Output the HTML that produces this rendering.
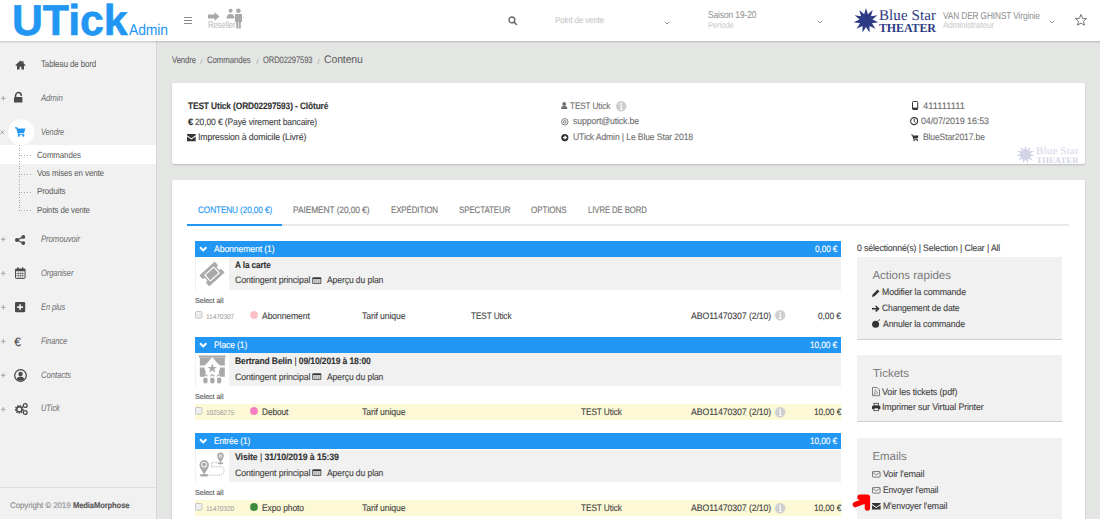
<!DOCTYPE html>
<html><head><meta charset="utf-8"><style>
*{box-sizing:border-box;margin:0;padding:0}
html,body{width:1100px;height:519px;overflow:hidden;background:#e4e6e4;font-family:"Liberation Sans",sans-serif;color:#333}
.t{position:absolute;white-space:nowrap;line-height:1;text-rendering:geometricPrecision;-webkit-text-stroke:.12px currentColor}
.i{position:absolute;overflow:visible}
.bx{position:absolute}
</style></head><body>
<div class="bx" style="left:0px;top:0px;width:1100px;height:41px;background:#fff"></div>
<div class="bx" style="left:0px;top:41px;width:157px;height:478px;background:#f1f1f1;border-right:1px solid #d6d6d6"></div>
<div class="bx" style="left:0px;top:41px;width:1100px;height:3px;background:linear-gradient(rgba(0,0,0,.2),rgba(0,0,0,.07) 40%,rgba(0,0,0,0))"></div>
<div class="bx" style="left:0px;top:487px;width:156px;height:1px;background:#dedede"></div>
<div class="bx" style="left:172px;top:83px;width:913px;height:81px;background:#fff;border-radius:2px;box-shadow:0 1px 2px rgba(0,0,0,.2)"></div>
<div class="bx" style="left:172px;top:180px;width:913px;height:350px;background:#fff;border-radius:2px;box-shadow:0 1px 2px rgba(0,0,0,.2)"></div>
<div class="bx" style="left:184px;top:17px;width:8px;height:1.2px;background:#8a8a8a"></div>
<div class="bx" style="left:184px;top:20px;width:8px;height:1.2px;background:#8a8a8a"></div>
<div class="bx" style="left:184px;top:23px;width:8px;height:1.2px;background:#8a8a8a"></div>
<div class="bx" style="left:0px;top:145px;width:156px;height:19px;background:#fff"></div>
<div class="bx" style="left:19px;top:145px;width:1px;height:66px;background:repeating-linear-gradient(180deg,#a5a5a5 0 1px,transparent 1px 2.6px)"></div>
<div class="bx" style="left:20px;top:154.5px;width:13px;height:1px;background:repeating-linear-gradient(90deg,transparent 0 1px,#a5a5a5 1px 2px,transparent 2px 3px)"></div>
<div class="bx" style="left:20px;top:173.5px;width:13px;height:1px;background:repeating-linear-gradient(90deg,transparent 0 1px,#a5a5a5 1px 2px,transparent 2px 3px)"></div>
<div class="bx" style="left:20px;top:192px;width:13px;height:1px;background:repeating-linear-gradient(90deg,transparent 0 1px,#a5a5a5 1px 2px,transparent 2px 3px)"></div>
<div class="bx" style="left:20px;top:210px;width:13px;height:1px;background:repeating-linear-gradient(90deg,transparent 0 1px,#a5a5a5 1px 2px,transparent 2px 3px)"></div>
<div class="bx" style="left:187px;top:224px;width:882px;height:1.5px;background:#e9e9e9"></div>
<div class="bx" style="left:187px;top:223.5px;width:94.5px;height:2.2px;background:#2196f3"></div>
<div class="bx" style="left:195.2px;top:241px;width:645.7px;height:15.5px;background:#2196f3"></div>
<div class="bx" style="left:195.2px;top:257.3px;width:33.5px;height:32.3px;background:#fff;border-left:1px solid #f0f0f0"></div>
<div class="bx" style="left:228.6px;top:257.3px;width:612.3px;height:32.3px;background:#f1f1f1"></div>
<div class="bx" style="left:195.2px;top:337.1px;width:645.7px;height:15.5px;background:#2196f3"></div>
<div class="bx" style="left:195.2px;top:353.40000000000003px;width:33.5px;height:32.3px;background:#fff;border-left:1px solid #f0f0f0"></div>
<div class="bx" style="left:228.6px;top:353.40000000000003px;width:612.3px;height:32.3px;background:#f1f1f1"></div>
<div class="bx" style="left:195.2px;top:404.20000000000005px;width:645.7px;height:16px;background:#fdf9d6"></div>
<div class="bx" style="left:195.2px;top:433.2px;width:645.7px;height:15.5px;background:#2196f3"></div>
<div class="bx" style="left:195.2px;top:449.5px;width:33.5px;height:32.3px;background:#fff;border-left:1px solid #f0f0f0"></div>
<div class="bx" style="left:228.6px;top:449.5px;width:612.3px;height:32.3px;background:#f1f1f1"></div>
<div class="bx" style="left:195.2px;top:500.29999999999995px;width:645.7px;height:16px;background:#fdf9d6"></div>
<div class="bx" style="left:856.5px;top:256.6px;width:205.2px;height:83px;background:#f1f1f1;border-bottom:1px solid #d0d0d0"></div>
<div class="bx" style="left:856.5px;top:355.4px;width:205.2px;height:67px;background:#f1f1f1;border-bottom:1px solid #d0d0d0"></div>
<div class="bx" style="left:856.5px;top:438.3px;width:205.2px;height:90px;background:#f1f1f1"></div>
<svg class="i" style="left:206px;top:7px;width:40px;height:24px;" viewBox="0 0 40 24">
<path d="M2 7.5h6.5V5l5 4.5-5 4.5v-2.5H2z" fill="#a9a9a9"/>
<circle cx="24.6" cy="3.8" r="2" fill="#a9a9a9"/>
<path d="M20.5 11.5q0-4.5 4-4.5t4 4.5z" fill="#a9a9a9"/>
<circle cx="32.4" cy="3.8" r="2.3" fill="#a9a9a9"/>
<path d="M29 7h7v8h-1.2v6.5h-2v-6.5h-0.6v6.5h-2v-6.5H29z" fill="#a9a9a9"/>
<circle cx="37.6" cy="10.8" r=".5" fill="#a9a9a9"/>
</svg>
<svg class="i" style="left:507.5px;top:16px;width:10px;height:10px;" viewBox="0 0 10 10"><circle cx="3.9" cy="3.9" r="2.9" fill="none" stroke="#6a6a6a" stroke-width="1.4"/><path d="M6 6l2.5 2.5" stroke="#6a6a6a" stroke-width="1.6" stroke-linecap="round"/></svg>
<svg class="i" style="left:663.8px;top:20.5px;width:6px;height:4px;" viewBox="0 0 6 4"><path d="M.8 .8l2.2 2.2 2.2-2.2" fill="none" stroke="#888" stroke-width=".9"/></svg>
<svg class="i" style="left:817px;top:20.3px;width:6px;height:4px;" viewBox="0 0 6 4"><path d="M.8 .8l2.2 2.2 2.2-2.2" fill="none" stroke="#888" stroke-width=".9"/></svg>
<svg class="i" style="left:850px;top:5px;width:30px;height:32px;" viewBox="0 0 30 32"><polygon points="16.00,3.00 17.83,9.26 22.76,4.98 20.91,11.24 27.37,10.31 22.43,14.57 28.37,17.28 21.91,18.20 25.45,23.69 19.51,20.97 19.52,27.49 16.00,22.00 12.48,27.49 12.49,20.97 6.55,23.69 10.09,18.20 3.63,17.28 9.57,14.57 4.63,10.31 11.09,11.24 9.24,4.98 14.17,9.26" fill="#2d3a84"/></svg>
<svg class="i" style="left:1049.3px;top:20.3px;width:6px;height:4px;" viewBox="0 0 6 4"><path d="M.8 .8l2.2 2.2 2.2-2.2" fill="none" stroke="#888" stroke-width=".9"/></svg>
<svg class="i" style="left:1075px;top:14px;width:12px;height:12px;" viewBox="0 0 12 12"><polygon points="6.00,0.40 7.53,4.30 11.71,4.55 8.47,7.20 9.53,11.25 6.00,9.00 2.47,11.25 3.53,7.20 0.29,4.55 4.47,4.30" fill="none" stroke="#777" stroke-width="1"/></svg>
<svg class="i" style="left:15px;top:59.5px;width:11px;height:10px;" viewBox="0 0 11 10"><path d="M5.5 .5L.3 5.2l.8.9 .9-.8V9.6h2.6V6.8h1.8v2.8h2.6V5.3l.9.8.8-.9L8.5 3.3V1h-1.3v1.2z" fill="#4a4a4a"/></svg>
<svg class="i" style="left:1px;top:95.7px;width:5px;height:5px;" viewBox="0 0 5 5"><path d="M0 2.3h4.6M2.3 0v4.6" stroke="#999" stroke-width=".8"/></svg>
<svg class="i" style="left:1px;top:237.2px;width:5px;height:5px;" viewBox="0 0 5 5"><path d="M0 2.3h4.6M2.3 0v4.6" stroke="#999" stroke-width=".8"/></svg>
<svg class="i" style="left:1px;top:270.7px;width:5px;height:5px;" viewBox="0 0 5 5"><path d="M0 2.3h4.6M2.3 0v4.6" stroke="#999" stroke-width=".8"/></svg>
<svg class="i" style="left:1px;top:304.7px;width:5px;height:5px;" viewBox="0 0 5 5"><path d="M0 2.3h4.6M2.3 0v4.6" stroke="#999" stroke-width=".8"/></svg>
<svg class="i" style="left:1px;top:338.7px;width:5px;height:5px;" viewBox="0 0 5 5"><path d="M0 2.3h4.6M2.3 0v4.6" stroke="#999" stroke-width=".8"/></svg>
<svg class="i" style="left:1px;top:372.7px;width:5px;height:5px;" viewBox="0 0 5 5"><path d="M0 2.3h4.6M2.3 0v4.6" stroke="#999" stroke-width=".8"/></svg>
<svg class="i" style="left:1px;top:406.7px;width:5px;height:5px;" viewBox="0 0 5 5"><path d="M0 2.3h4.6M2.3 0v4.6" stroke="#999" stroke-width=".8"/></svg>
<svg class="i" style="left:14px;top:92.3px;width:9px;height:11px;" viewBox="0 0 9 11"><path d="M1.6 5.2V3.4A2.8 2.8 0 0 1 7.2 3.4v.6" fill="none" stroke="#4a4a4a" stroke-width="1.5"/><rect x="0" y="5" width="8.4" height="5.6" rx=".7" fill="#4a4a4a"/></svg>
<svg class="i" style="left:7.5px;top:119px;width:27px;height:27px;" viewBox="0 0 27 27"><circle cx="13.3" cy="13.2" r="13" fill="#fff"/></svg>
<svg class="i" style="left:0px;top:130px;width:5px;height:5px;" viewBox="0 0 5 5"><path d="M.5 .5l3.6 3.6M4.1 .5L.5 4.1" stroke="#999" stroke-width=".8"/></svg>
<svg class="i" style="left:14.5px;top:127px;width:11px;height:10px;" viewBox="0 0 11 10"><path d="M0 .3h2.3l.5 1.2h7.6L9 6H3.6l.3.8h5.3v1H3L1.3 1.5H0z" fill="#2196f3"/><rect x="3" y="2.6" width="6" height="2.4" fill="#2196f3"/><circle cx="4" cy="8.7" r="1.1" fill="#2196f3"/><circle cx="8.3" cy="8.7" r="1.1" fill="#2196f3"/></svg>
<svg class="i" style="left:14.5px;top:235px;width:11px;height:10px;" viewBox="0 0 11 10"><circle cx="2" cy="5" r="2" fill="#4a4a4a"/><circle cx="8.3" cy="1.9" r="1.9" fill="#4a4a4a"/><circle cx="8.3" cy="8.1" r="1.9" fill="#4a4a4a"/><path d="M2 5L8.3 1.9M2 5l6.3 3.2" stroke="#4a4a4a" stroke-width="1.2"/></svg>
<svg class="i" style="left:14.5px;top:267px;width:11px;height:12px;" viewBox="0 0 11 12"><rect x=".5" y="2" width="9.6" height="9.4" rx=".6" fill="none" stroke="#4a4a4a" stroke-width="1"/><rect x=".5" y="2" width="9.6" height="2.2" fill="#4a4a4a"/><path d="M3 .3v2.6M7.6 .3v2.6" stroke="#4a4a4a" stroke-width="1.2"/><path d="M1 6.5h8.6M1 8.6h8.6M3.2 4.5v6.6M5.3 4.5v6.6M7.4 4.5v6.6" stroke="#4a4a4a" stroke-width=".5"/></svg>
<svg class="i" style="left:14.5px;top:302.3px;width:10.5px;height:10.5px;" viewBox="0 0 10.5 10.5"><rect x="0" y="0" width="10.2" height="10.2" rx="1.3" fill="#4a4a4a"/><path d="M5.1 2.2v5.8M2.2 5.1h5.8" stroke="#f1f1f1" stroke-width="1.6"/></svg>
<svg class="i" style="left:13.5px;top:369px;width:13px;height:13px;" viewBox="0 0 13 13"><circle cx="6.5" cy="6.5" r="5.8" fill="none" stroke="#4a4a4a" stroke-width="1.3"/><circle cx="6.5" cy="5" r="2.2" fill="#4a4a4a"/><path d="M2.6 10.2q1-2.8 3.9-2.8t3.9 2.8q-1.6 1.6-3.9 1.6t-3.9-1.6z" fill="#4a4a4a"/></svg>
<svg class="i" style="left:14.5px;top:402.5px;width:13px;height:12px;" viewBox="0 0 13 12"><circle cx="4.3" cy="6.3" r="3.3" fill="none" stroke="#4a4a4a" stroke-width="2.2" stroke-dasharray="1.3 .9"/><circle cx="4.3" cy="6.3" r="2.6" fill="none" stroke="#4a4a4a" stroke-width="1.4"/><circle cx="10.2" cy="2.5" r="1.9" fill="none" stroke="#4a4a4a" stroke-width="1.3"/><circle cx="10.2" cy="9.5" r="1.9" fill="none" stroke="#4a4a4a" stroke-width="1.3"/></svg>
<svg class="i" style="left:187.3px;top:133.6px;width:9px;height:7.5px;" viewBox="0 0 9 7.5"><path d="M0 0h8.7v1.2L4.35 4.2 0 1.2z M0 2.4l4.35 3 4.35-3V7.3H0z" fill="#333"/></svg>
<svg class="i" style="left:561px;top:102.3px;width:7px;height:7.2px;" viewBox="0 0 7 7.2"><circle cx="3.2" cy="1.9" r="1.9" fill="#707070"/><path d="M0 7.1q0-3.4 3.2-3.4t3.2 3.4z" fill="#707070"/></svg>
<svg class="i" style="left:615.8px;top:100.8px;width:10.5px;height:10.5px;" viewBox="0 0 10.5 10.5"><circle cx="5.2" cy="5.2" r="5.2" fill="#cfcfcf"/><circle cx="5.2" cy="2.7" r=".9" fill="#fff"/><path d="M4.1 4.3h1.8v3.9h.8v.7H3.9v-.7h.8V5h-.6z" fill="#fff"/></svg>
<svg class="i" style="left:561px;top:118px;width:8px;height:8px;" viewBox="0 0 8 8"><circle cx="3.8" cy="3.8" r="3.2" fill="none" stroke="#707070" stroke-width=".9"/><circle cx="3.8" cy="3.8" r="1.3" fill="none" stroke="#707070" stroke-width=".9"/></svg>
<svg class="i" style="left:561px;top:133.8px;width:8px;height:8px;" viewBox="0 0 8 8"><circle cx="3.8" cy="3.6" r="3.6" fill="#333"/><path d="M2 3.6h2.6M3.6 2l1.7 1.6-1.7 1.6" fill="none" stroke="#fff" stroke-width="1.1"/></svg>
<svg class="i" style="left:911.6px;top:101px;width:6.5px;height:9px;" viewBox="0 0 6.5 9"><rect x=".5" y=".5" width="5.2" height="8" rx=".9" fill="none" stroke="#333" stroke-width="1"/><rect x=".5" y="6.6" width="5.2" height="1.9" fill="#333"/></svg>
<svg class="i" style="left:910.4px;top:116.7px;width:8.2px;height:8.2px;" viewBox="0 0 8.2 8.2"><circle cx="4.1" cy="4.1" r="3.5" fill="none" stroke="#333" stroke-width="1.1"/><path d="M4.1 2v2.3l1.5 1.3" fill="none" stroke="#333" stroke-width="1"/></svg>
<svg class="i" style="left:911px;top:133.5px;width:8px;height:7.2px;" viewBox="0 0 8 7.2"><path d="M0 .5h1.6l.5 1H7.6L6.6 4.5H2.9l.2.6h3.8v.7H2.5L1.1 1.3H0z" fill="#333"/><circle cx="3.2" cy="6.5" r=".7" fill="#333"/><circle cx="6.2" cy="6.5" r=".7" fill="#333"/></svg>
<svg class="i" style="left:1015px;top:144px;width:21px;height:21px;" viewBox="0 0 21 21"><polygon points="10.50,1.20 11.85,5.89 15.53,2.68 14.13,7.36 18.96,6.64 15.25,9.82 19.71,11.82 14.87,12.49 17.53,16.59 13.10,14.54 13.12,19.42 10.50,15.30 7.88,19.42 7.90,14.54 3.47,16.59 6.13,12.49 1.29,11.82 5.75,9.82 2.04,6.64 6.87,7.36 5.47,2.68 9.15,5.89" fill="#d2d4e6"/></svg>
<svg class="i" style="left:198.5px;top:246px;width:8.6px;height:6px;" viewBox="0 0 8.6 6"><path d="M1 1.2l3.2 3.2 3.2-3.2" fill="none" stroke="#fff" stroke-width="2"/></svg>
<svg class="i" style="left:198.8px;top:261.5px;width:26px;height:24px;" viewBox="0 0 26 24"><g transform="rotate(-42 13 12)"><path d="M3 5h20v4.3a2.7 2.7 0 0 0 0 5.4V19H3v-4.3a2.7 2.7 0 0 0 0-5.4z" fill="#a9a9a9" stroke="#a9a9a9" stroke-width=".8" stroke-linejoin="round"/><rect x="7" y="8" width="12" height="8" fill="none" stroke="#fff" stroke-width="1.2"/></g></svg>
<svg class="i" style="left:311.8px;top:276.6px;width:9.6px;height:7.4px;" viewBox="0 0 9.6 7.4"><rect x=".3" y=".3" width="9" height="6.8" rx="1" fill="#3a3a3a"/><rect x="1.1" y="2" width="7.4" height="4.3" fill="#d8d8d8"/><path d="M2.8 2v4.3M4.8 2v4.3M6.8 2v4.3" stroke="#888" stroke-width=".6"/></svg>
<svg class="i" style="left:195.2px;top:310.70000000000005px;width:8px;height:8px;" viewBox="0 0 8 8"><rect x=".5" y=".5" width="6.4" height="6.6" rx="1.2" fill="#eee" stroke="#b9b9b9" stroke-width=".8"/></svg>
<svg class="i" style="left:250.3px;top:310.5px;width:8px;height:8px;" viewBox="0 0 8 8"><circle cx="4" cy="4" r="3.9" fill="#f9c0c6"/></svg>
<svg class="i" style="left:774.6px;top:310.40000000000003px;width:10.5px;height:10.5px;" viewBox="0 0 10.5 10.5"><circle cx="5.2" cy="5.2" r="5.2" fill="#cfcfcf"/><circle cx="5.2" cy="2.7" r=".9" fill="#fff"/><path d="M4.1 4.3h1.8v3.9h.8v.7H3.9v-.7h.8V5h-.6z" fill="#fff"/></svg>
<svg class="i" style="left:198.5px;top:342.1px;width:8.6px;height:6px;" viewBox="0 0 8.6 6"><path d="M1 1.2l3.2 3.2 3.2-3.2" fill="none" stroke="#fff" stroke-width="2"/></svg>
<svg class="i" style="left:195px;top:352.0px;width:35px;height:36px;" viewBox="0 0 35 36"><path d="M3.6 3.6h27.2l-.4 2H4z" fill="#a9a9a9"/>
<path d="M4.8 5.6H16.8Q13 11 9.6 13.6H4.8z" fill="#a9a9a9"/><path d="M29.8 5.6H17.8Q21.6 11 25 13.6h4.8z" fill="#a9a9a9"/>
<path d="M4.8 15.6h4.6l1.4 4.6-1.6 4.6H4.8z" fill="#a9a9a9"/><path d="M29.8 15.6h-4.6l-1.4 4.6 1.6 4.6h4.4z" fill="#a9a9a9"/>
<polygon points="17.3,11.6 18.6,14.9 22,15 19.3,17.1 20.3,20.4 17.3,18.5 14.3,20.4 15.3,17.1 12.6,15 16,14.9" fill="#a9a9a9"/>
<rect x="8.3" y="25.6" width="4.3" height="6" rx="2" fill="#a9a9a9"/><rect x="15.2" y="25.6" width="4.3" height="6" rx="2" fill="#a9a9a9"/><rect x="22" y="25.6" width="4.3" height="6" rx="2" fill="#a9a9a9"/>
<path d="M8.6 24.4a1.9 1.9 0 0 1 3.7 0M15.5 24.4a1.9 1.9 0 0 1 3.7 0M22.3 24.4a1.9 1.9 0 0 1 3.7 0" fill="none" stroke="#a9a9a9" stroke-width="1.2"/></svg>
<svg class="i" style="left:311.8px;top:372.70000000000005px;width:9.6px;height:7.4px;" viewBox="0 0 9.6 7.4"><rect x=".3" y=".3" width="9" height="6.8" rx="1" fill="#3a3a3a"/><rect x="1.1" y="2" width="7.4" height="4.3" fill="#d8d8d8"/><path d="M2.8 2v4.3M4.8 2v4.3M6.8 2v4.3" stroke="#888" stroke-width=".6"/></svg>
<svg class="i" style="left:195.2px;top:406.80000000000007px;width:8px;height:8px;" viewBox="0 0 8 8"><rect x=".5" y=".5" width="6.4" height="6.6" rx="1.2" fill="#eee" stroke="#b9b9b9" stroke-width=".8"/></svg>
<svg class="i" style="left:250.3px;top:406.6px;width:8px;height:8px;" viewBox="0 0 8 8"><circle cx="4" cy="4" r="3.9" fill="#f47fc0"/></svg>
<svg class="i" style="left:774.6px;top:406.50000000000006px;width:10.5px;height:10.5px;" viewBox="0 0 10.5 10.5"><circle cx="5.2" cy="5.2" r="5.2" fill="#cfcfcf"/><circle cx="5.2" cy="2.7" r=".9" fill="#fff"/><path d="M4.1 4.3h1.8v3.9h.8v.7H3.9v-.7h.8V5h-.6z" fill="#fff"/></svg>
<svg class="i" style="left:198.5px;top:438.2px;width:8.6px;height:6px;" viewBox="0 0 8.6 6"><path d="M1 1.2l3.2 3.2 3.2-3.2" fill="none" stroke="#fff" stroke-width="2"/></svg>
<svg class="i" style="left:195px;top:449.0px;width:35px;height:33px;" viewBox="0 0 35 33"><path d="M22.3 13.7H16.5V17.8H25.5Q29 17.8 29 21.8T25.5 26.1H14.8" fill="none" stroke="#b0b0b0" stroke-width="1" stroke-dasharray="1.1 1"/>
<ellipse cx="25.5" cy="14.3" rx="2.9" ry="1.1" fill="#a9a9a9"/>
<path d="M25.5 3.6a3.3 3.3 0 0 1 3.3 3.3c0 2.3-3.3 6.3-3.3 6.3s-3.3-4-3.3-6.3a3.3 3.3 0 0 1 3.3-3.3z" fill="#a9a9a9"/><circle cx="25.5" cy="7" r="1.8" fill="#fff"/><circle cx="25.5" cy="7" r="1" fill="#a9a9a9"/>
<ellipse cx="9.2" cy="26.2" rx="4.6" ry="1.3" fill="#a9a9a9"/>
<path d="M9.2 11a4.7 4.7 0 0 1 4.7 4.7c0 3.4-4.7 9.6-4.7 9.6s-4.7-6.2-4.7-9.6A4.7 4.7 0 0 1 9.2 11z" fill="#a9a9a9"/><circle cx="9.2" cy="15.6" r="2.9" fill="#fff"/><circle cx="9.2" cy="15.6" r="2" fill="#a9a9a9"/></svg>
<svg class="i" style="left:311.8px;top:468.8px;width:9.6px;height:7.4px;" viewBox="0 0 9.6 7.4"><rect x=".3" y=".3" width="9" height="6.8" rx="1" fill="#3a3a3a"/><rect x="1.1" y="2" width="7.4" height="4.3" fill="#d8d8d8"/><path d="M2.8 2v4.3M4.8 2v4.3M6.8 2v4.3" stroke="#888" stroke-width=".6"/></svg>
<svg class="i" style="left:195.2px;top:502.9px;width:8px;height:8px;" viewBox="0 0 8 8"><rect x=".5" y=".5" width="6.4" height="6.6" rx="1.2" fill="#eee" stroke="#b9b9b9" stroke-width=".8"/></svg>
<svg class="i" style="left:250.3px;top:502.69999999999993px;width:8px;height:8px;" viewBox="0 0 8 8"><circle cx="4" cy="4" r="3.9" fill="#3d8b3d"/></svg>
<svg class="i" style="left:774.6px;top:502.59999999999997px;width:10.5px;height:10.5px;" viewBox="0 0 10.5 10.5"><circle cx="5.2" cy="5.2" r="5.2" fill="#cfcfcf"/><circle cx="5.2" cy="2.7" r=".9" fill="#fff"/><path d="M4.1 4.3h1.8v3.9h.8v.7H3.9v-.7h.8V5h-.6z" fill="#fff"/></svg>
<svg class="i" style="left:872px;top:289px;width:8px;height:7.5px;" viewBox="0 0 8 7.5"><path d="M5.6.6l1.8 1.8-4.9 4.9L0 7.9l.6-2.5z" fill="#333"/></svg>
<svg class="i" style="left:872px;top:304.5px;width:8px;height:7.5px;" viewBox="0 0 8 7.5"><path d="M0 3.75h6M3.7 1l2.8 2.75L3.7 6.5" fill="none" stroke="#333" stroke-width="1.6"/></svg>
<svg class="i" style="left:872px;top:319.2px;width:8.5px;height:9px;" viewBox="0 0 8.5 9"><circle cx="3.6" cy="5.3" r="3.5" fill="#333"/><path d="M5.5 2.5l1.2-1.2" stroke="#333" stroke-width="1"/><circle cx="7.6" cy=".8" r=".6" fill="#333"/></svg>
<svg class="i" style="left:872px;top:387px;width:8px;height:9.2px;" viewBox="0 0 8 9.2"><path d="M.5.5h4.5l2.5 2.5v5.7H.5z" fill="none" stroke="#707070" stroke-width=".9"/><path d="M2 7.5q1-3 1.5-5q.5 2.5 2.5 3.5q-2 0-4 1.5" fill="none" stroke="#707070" stroke-width=".6"/></svg>
<svg class="i" style="left:872px;top:403px;width:8.5px;height:8px;" viewBox="0 0 8.5 8"><rect x="2" y=".3" width="4.5" height="2.5" fill="none" stroke="#333" stroke-width=".8"/><rect x="0" y="2.8" width="8.4" height="3.4" rx=".8" fill="#333"/><rect x="2" y="5" width="4.5" height="2.7" fill="#fff" stroke="#333" stroke-width=".8"/></svg>
<svg class="i" style="left:872.4px;top:471.3px;width:8.6px;height:6.6px;" viewBox="0 0 8.6 6.6"><rect x=".5" y=".5" width="7.6" height="5.6" rx=".6" fill="none" stroke="#707070" stroke-width=".9"/><path d="M.8 1.3l3.5 2.6 3.5-2.6" fill="none" stroke="#707070" stroke-width=".9"/></svg>
<svg class="i" style="left:872.4px;top:487px;width:8.6px;height:6.6px;" viewBox="0 0 8.6 6.6"><rect x=".5" y=".5" width="7.6" height="5.6" rx=".6" fill="none" stroke="#707070" stroke-width=".9"/><path d="M.8 1.3l3.5 2.6 3.5-2.6" fill="none" stroke="#707070" stroke-width=".9"/></svg>
<svg class="i" style="left:872.4px;top:502.8px;width:8.6px;height:6.6px;" viewBox="0 0 8.6 6.6"><path d="M0 0h8.6v1.1L4.3 4 0 1.1z M0 2.2l4.3 2.9 4.3-2.9v4.3H0z" fill="#333"/></svg>
<svg class="i" style="left:848px;top:490px;width:26px;height:24px;" viewBox="0 0 26 24"><path d="M7.3 14.6Q12 12.8 18.5 10.5M12 7.3h7.4v10.8" fill="none" stroke="#ff0000" stroke-width="5.4" stroke-linecap="round" stroke-linejoin="round"/></svg>
<div class="t" style="left:12.3px;top:-0.10px;font-size:43px;color:#2196f3;letter-spacing:-0.120px;transform:scaleX(0.9970);transform-origin:0 0;font-weight:bold;-webkit-text-stroke:.6px #2196f3">UTick</div>
<div class="t" style="left:129px;top:23.28px;font-size:15.5px;color:#2196f3;letter-spacing:-0.120px;transform:scaleX(0.8974);transform-origin:0 0;-webkit-text-stroke:0">Admin</div>
<div class="t" style="left:207.5px;top:20.82px;font-size:9.9px;color:#b8b8b8;letter-spacing:-0.120px;transform:scaleX(0.7770);transform-origin:0 0;-webkit-text-stroke:0">Reseller</div>
<div class="t" style="left:554.8px;top:15.65px;font-size:8.8px;color:#c9c9c9;letter-spacing:-0.120px;transform:scaleX(0.8996);transform-origin:0 0;">Point de vente</div>
<div class="t" style="left:707.6px;top:11.12px;font-size:9.9px;color:#8c8c8c;letter-spacing:-0.120px;transform:scaleX(0.8509);transform-origin:0 0;-webkit-text-stroke:0">Saison 19-20</div>
<div class="t" style="left:707.6px;top:21.05px;font-size:8.8px;color:#cfcfcf;letter-spacing:-0.120px;transform:scaleX(0.8748);transform-origin:0 0;">Periode</div>
<div class="t" style="left:879px;top:9.00px;font-size:15px;color:#2d3a84;font-family:'Liberation Serif',serif;-webkit-text-stroke:0;letter-spacing:0.094px;">Blue Star</div>
<div class="t" style="left:879px;top:21.59px;font-size:12.3px;color:#2d3a84;font-family:'Liberation Serif',serif;-webkit-text-stroke:0;letter-spacing:-0.120px;transform:scaleX(0.9741);transform-origin:0 0;font-weight:bold">THEATER</div>
<div class="t" style="left:942.7px;top:11.82px;font-size:9.9px;color:#8c8c8c;letter-spacing:-0.120px;transform:scaleX(0.8369);transform-origin:0 0;-webkit-text-stroke:0">VAN DER GHINST Virginie</div>
<div class="t" style="left:942.7px;top:21.15px;font-size:8.8px;color:#cfcfcf;letter-spacing:-0.120px;transform:scaleX(0.9228);transform-origin:0 0;">Administrateur</div>
<div class="t" style="left:40.8px;top:60.49px;font-size:9.35px;color:#5c5c5c;letter-spacing:-0.120px;transform:scaleX(0.8447);transform-origin:0 0;-webkit-text-stroke:.05px">Tableau de bord</div>
<div class="t" style="left:40.8px;top:93.99px;font-size:9.35px;color:#6c6c6c;letter-spacing:-0.120px;transform:scaleX(0.8378);transform-origin:0 0;font-style:italic;-webkit-text-stroke:0">Admin</div>
<div class="t" style="left:40.8px;top:127.99px;font-size:9.35px;color:#6c6c6c;letter-spacing:-0.120px;transform:scaleX(0.7946);transform-origin:0 0;font-style:italic;-webkit-text-stroke:0">Vendre</div>
<div class="t" style="left:37px;top:150.95px;font-size:8.8px;color:#5c5c5c;letter-spacing:-0.120px;transform:scaleX(0.8975);transform-origin:0 0;-webkit-text-stroke:.05px">Commandes</div>
<div class="t" style="left:37px;top:169.15px;font-size:8.8px;color:#5c5c5c;letter-spacing:-0.120px;transform:scaleX(0.9025);transform-origin:0 0;-webkit-text-stroke:.05px">Vos mises en vente</div>
<div class="t" style="left:37px;top:187.25px;font-size:8.8px;color:#5c5c5c;letter-spacing:-0.120px;transform:scaleX(0.9065);transform-origin:0 0;-webkit-text-stroke:.05px">Produits</div>
<div class="t" style="left:37px;top:205.65px;font-size:8.8px;color:#5c5c5c;letter-spacing:-0.120px;transform:scaleX(0.8987);transform-origin:0 0;-webkit-text-stroke:.05px">Points de vente</div>
<div class="t" style="left:40.8px;top:235.19px;font-size:9.35px;color:#6c6c6c;letter-spacing:-0.120px;transform:scaleX(0.8351);transform-origin:0 0;font-style:italic;-webkit-text-stroke:0">Promouvoir</div>
<div class="t" style="left:40.8px;top:268.89px;font-size:9.35px;color:#6c6c6c;letter-spacing:-0.120px;transform:scaleX(0.8086);transform-origin:0 0;font-style:italic;-webkit-text-stroke:0">Organiser</div>
<div class="t" style="left:40.8px;top:302.59px;font-size:9.35px;color:#6c6c6c;letter-spacing:-0.120px;transform:scaleX(0.7980);transform-origin:0 0;font-style:italic;-webkit-text-stroke:0">En plus</div>
<div class="t" style="left:40.8px;top:336.99px;font-size:9.35px;color:#6c6c6c;letter-spacing:-0.120px;transform:scaleX(0.8054);transform-origin:0 0;font-style:italic;-webkit-text-stroke:0">Finance</div>
<div class="t" style="left:14.2px;top:335.74px;font-size:12px;color:#4a4a4a;">€</div>
<div class="t" style="left:40.8px;top:370.79px;font-size:9.35px;color:#6c6c6c;letter-spacing:-0.120px;transform:scaleX(0.8325);transform-origin:0 0;font-style:italic;-webkit-text-stroke:0">Contacts</div>
<div class="t" style="left:40.8px;top:404.49px;font-size:9.35px;color:#6c6c6c;letter-spacing:-0.120px;transform:scaleX(0.8106);transform-origin:0 0;font-style:italic;-webkit-text-stroke:0">UTick</div>
<div class="t" style="left:9.9px;top:501.92px;font-size:8.25px;color:#8c8c8c;letter-spacing:-0.120px;transform:scaleX(0.9692);transform-origin:0 0;">Copyright © 2019</div>
<div class="t" style="left:72.7px;top:501.92px;font-size:8.25px;color:#555;letter-spacing:-0.120px;transform:scaleX(0.9206);transform-origin:0 0;font-weight:bold">MediaMorphose</div>
<div class="t" style="left:172px;top:55.79px;font-size:9.35px;color:#666;letter-spacing:-0.120px;transform:scaleX(0.8269);transform-origin:0 0;">Vendre</div>
<div class="t" style="left:200.5px;top:58.65px;font-size:7.15px;color:#999;-webkit-text-stroke:0">/</div>
<div class="t" style="left:207px;top:55.79px;font-size:9.35px;color:#666;letter-spacing:-0.120px;transform:scaleX(0.8381);transform-origin:0 0;">Commandes</div>
<div class="t" style="left:256.5px;top:58.65px;font-size:7.15px;color:#999;-webkit-text-stroke:0">/</div>
<div class="t" style="left:262.5px;top:55.79px;font-size:9.35px;color:#666;letter-spacing:-0.120px;transform:scaleX(0.8096);transform-origin:0 0;">ORD02297593</div>
<div class="t" style="left:317.5px;top:58.65px;font-size:7.15px;color:#999;-webkit-text-stroke:0">/</div>
<div class="t" style="left:323.6px;top:54.89px;font-size:11px;color:#5a5a5a;letter-spacing:-0.120px;transform:scaleX(0.9517);transform-origin:0 0;-webkit-text-stroke:0">Contenu</div>
<div class="t" style="left:188px;top:101.89px;font-size:9.35px;color:#333;letter-spacing:-0.120px;transform:scaleX(0.8912);transform-origin:0 0;font-weight:bold">TEST Utick (ORD02297593) - Clôturé</div>
<div class="t" style="left:188px;top:117.89px;font-size:9.35px;color:#333;font-weight:bold">€</div>
<div class="t" style="left:194.5px;top:117.89px;font-size:9.35px;color:#444;letter-spacing:-0.120px;transform:scaleX(0.9090);transform-origin:0 0;">20,00 € (Payé virement bancaire)</div>
<div class="t" style="left:198.2px;top:133.19px;font-size:9.35px;color:#444;letter-spacing:-0.120px;transform:scaleX(0.9330);transform-origin:0 0;">Impression à domicile (Livré)</div>
<div class="t" style="left:570px;top:101.59px;font-size:9.35px;color:#707070;letter-spacing:-0.120px;transform:scaleX(0.8761);transform-origin:0 0;">TEST Utick</div>
<div class="t" style="left:572.7px;top:117.29px;font-size:9.35px;color:#707070;letter-spacing:-0.120px;transform:scaleX(0.9316);transform-origin:0 0;">support@utick.be</div>
<div class="t" style="left:572.7px;top:132.99px;font-size:9.35px;color:#707070;letter-spacing:-0.120px;transform:scaleX(0.9173);transform-origin:0 0;">UTick Admin | Le Blue Star 2018</div>
<div class="t" style="left:923.1px;top:101.99px;font-size:9.35px;color:#707070;letter-spacing:-0.003px;">411111111</div>
<div class="t" style="left:921px;top:117.39px;font-size:9.35px;color:#707070;letter-spacing:-0.120px;transform:scaleX(0.9598);transform-origin:0 0;">04/07/2019 16:53</div>
<div class="t" style="left:922.9px;top:132.79px;font-size:9.35px;color:#707070;letter-spacing:-0.120px;transform:scaleX(0.9110);transform-origin:0 0;">BlueStar2017.be</div>
<div class="t" style="left:1035.8px;top:146.61px;font-size:10.5px;color:#d2d4e6;font-family:'Liberation Serif',serif;-webkit-text-stroke:0;letter-spacing:0.120px;transform:scaleX(1.0562);transform-origin:0 0;">Blue Star</div>
<div class="t" style="left:1036.4px;top:156.02px;font-size:8.6px;color:#d2d4e6;font-family:'Liberation Serif',serif;-webkit-text-stroke:0;letter-spacing:0.102px;font-weight:bold">THEATER</div>
<div class="t" style="left:197.5px;top:205.89px;font-size:9.35px;color:#2196f3;letter-spacing:-0.120px;transform:scaleX(0.8804);transform-origin:0 0;">CONTENU (20,00 €)</div>
<div class="t" style="left:293px;top:205.89px;font-size:9.35px;color:#757575;letter-spacing:-0.120px;transform:scaleX(0.9014);transform-origin:0 0;">PAIEMENT (20,00 €)</div>
<div class="t" style="left:390.9px;top:205.89px;font-size:9.35px;color:#757575;letter-spacing:-0.120px;transform:scaleX(0.8484);transform-origin:0 0;">EXPÉDITION</div>
<div class="t" style="left:459px;top:205.89px;font-size:9.35px;color:#757575;letter-spacing:-0.120px;transform:scaleX(0.8516);transform-origin:0 0;">SPECTATEUR</div>
<div class="t" style="left:531.4px;top:205.89px;font-size:9.35px;color:#757575;letter-spacing:-0.120px;transform:scaleX(0.8611);transform-origin:0 0;">OPTIONS</div>
<div class="t" style="left:587.8px;top:205.89px;font-size:9.35px;color:#757575;letter-spacing:-0.120px;transform:scaleX(0.8325);transform-origin:0 0;">LIVRE DE BORD</div>
<div class="t" style="left:213.6px;top:244.59px;font-size:9.35px;color:#fff;letter-spacing:-0.120px;transform:scaleX(0.9273);transform-origin:0 0;">Abonnement (1)</div>
<div class="t" style="left:814.9px;top:244.59px;font-size:9.35px;color:#fff;letter-spacing:-0.120px;transform:scaleX(0.8824);transform-origin:0 0;">0,00 €</div>
<div class="t" style="left:235.1px;top:261.09px;font-size:9.35px;color:#333;letter-spacing:-0.120px;transform:scaleX(0.8806);transform-origin:0 0;font-weight:bold">A la carte</div>
<div class="t" style="left:235.1px;top:276.49px;font-size:9.35px;color:#444;letter-spacing:-0.120px;transform:scaleX(0.9388);transform-origin:0 0;">Contingent principal</div>
<div class="t" style="left:326.8px;top:276.49px;font-size:9.35px;color:#444;letter-spacing:-0.120px;transform:scaleX(0.9201);transform-origin:0 0;">Aperçu du plan</div>
<div class="t" style="left:195px;top:297.85px;font-size:7.15px;color:#555;letter-spacing:-0.054px;">Select all</div>
<div class="t" style="left:205.6px;top:314.63px;font-size:6.93px;color:#aaa;letter-spacing:-0.120px;transform:scaleX(0.9607);transform-origin:0 0;">11470307</div>
<div class="t" style="left:261.7px;top:311.59px;font-size:9.35px;color:#444;letter-spacing:-0.120px;transform:scaleX(0.9206);transform-origin:0 0;">Abonnement</div>
<div class="t" style="left:361.5px;top:311.59px;font-size:9.35px;color:#444;letter-spacing:-0.120px;transform:scaleX(0.9257);transform-origin:0 0;">Tarif unique</div>
<div class="t" style="left:471.3px;top:311.59px;font-size:9.35px;color:#444;letter-spacing:-0.120px;transform:scaleX(0.8805);transform-origin:0 0;">TEST Utick</div>
<div class="t" style="left:691.2px;top:311.59px;font-size:9.35px;color:#444;letter-spacing:-0.120px;transform:scaleX(0.9371);transform-origin:0 0;">ABO11470307 (2/10)</div>
<div class="t" style="left:818px;top:311.59px;font-size:9.35px;color:#444;letter-spacing:-0.120px;transform:scaleX(0.9061);transform-origin:0 0;">0,00 €</div>
<div class="t" style="left:213.6px;top:340.69px;font-size:9.35px;color:#fff;letter-spacing:-0.120px;transform:scaleX(0.9141);transform-origin:0 0;">Place (1)</div>
<div class="t" style="left:810.4px;top:340.69px;font-size:9.35px;color:#fff;letter-spacing:-0.120px;transform:scaleX(0.8928);transform-origin:0 0;">10,00 €</div>
<div class="t" style="left:235.3px;top:356.69px;font-size:9.35px;color:#333;letter-spacing:-0.120px;transform:scaleX(0.9114);transform-origin:0 0;font-weight:bold">Bertrand Belin <span style="font-weight:normal">|</span> 09/10/2019 à 18:00</div>
<div class="t" style="left:235.1px;top:372.59px;font-size:9.35px;color:#444;letter-spacing:-0.120px;transform:scaleX(0.9388);transform-origin:0 0;">Contingent principal</div>
<div class="t" style="left:326.8px;top:372.59px;font-size:9.35px;color:#444;letter-spacing:-0.120px;transform:scaleX(0.9201);transform-origin:0 0;">Aperçu du plan</div>
<div class="t" style="left:195px;top:393.95px;font-size:7.15px;color:#555;letter-spacing:-0.054px;">Select all</div>
<div class="t" style="left:205.6px;top:410.73px;font-size:6.93px;color:#aaa;letter-spacing:-0.120px;transform:scaleX(0.9442);transform-origin:0 0;">10256275</div>
<div class="t" style="left:261.7px;top:407.69px;font-size:9.35px;color:#444;letter-spacing:-0.120px;transform:scaleX(0.8937);transform-origin:0 0;">Debout</div>
<div class="t" style="left:361.5px;top:407.69px;font-size:9.35px;color:#444;letter-spacing:-0.120px;transform:scaleX(0.9257);transform-origin:0 0;">Tarif unique</div>
<div class="t" style="left:581.3px;top:407.69px;font-size:9.35px;color:#444;letter-spacing:-0.120px;transform:scaleX(0.8892);transform-origin:0 0;">TEST Utick</div>
<div class="t" style="left:691.2px;top:407.69px;font-size:9.35px;color:#444;letter-spacing:-0.120px;transform:scaleX(0.9371);transform-origin:0 0;">ABO11470307 (2/10)</div>
<div class="t" style="left:813.6px;top:407.69px;font-size:9.35px;color:#444;letter-spacing:-0.120px;transform:scaleX(0.8960);transform-origin:0 0;">10,00 €</div>
<div class="t" style="left:213.6px;top:436.79px;font-size:9.35px;color:#fff;letter-spacing:-0.120px;transform:scaleX(0.8995);transform-origin:0 0;">Entrée (1)</div>
<div class="t" style="left:810.4px;top:436.79px;font-size:9.35px;color:#fff;letter-spacing:-0.120px;transform:scaleX(0.8928);transform-origin:0 0;">10,00 €</div>
<div class="t" style="left:235px;top:452.89px;font-size:9.35px;color:#333;letter-spacing:-0.120px;transform:scaleX(0.9426);transform-origin:0 0;font-weight:bold">Visite <span style="font-weight:normal">|</span> 31/10/2019 à 15:39</div>
<div class="t" style="left:235.1px;top:468.69px;font-size:9.35px;color:#444;letter-spacing:-0.120px;transform:scaleX(0.9388);transform-origin:0 0;">Contingent principal</div>
<div class="t" style="left:326.8px;top:468.69px;font-size:9.35px;color:#444;letter-spacing:-0.120px;transform:scaleX(0.9201);transform-origin:0 0;">Aperçu du plan</div>
<div class="t" style="left:195px;top:490.05px;font-size:7.15px;color:#555;letter-spacing:-0.054px;">Select all</div>
<div class="t" style="left:205.6px;top:506.83px;font-size:6.93px;color:#aaa;letter-spacing:-0.120px;transform:scaleX(0.9607);transform-origin:0 0;">11470320</div>
<div class="t" style="left:261.7px;top:503.79px;font-size:9.35px;color:#444;letter-spacing:-0.120px;transform:scaleX(0.9112);transform-origin:0 0;">Expo photo</div>
<div class="t" style="left:361.5px;top:503.79px;font-size:9.35px;color:#444;letter-spacing:-0.120px;transform:scaleX(0.9257);transform-origin:0 0;">Tarif unique</div>
<div class="t" style="left:581.3px;top:503.79px;font-size:9.35px;color:#444;letter-spacing:-0.120px;transform:scaleX(0.8892);transform-origin:0 0;">TEST Utick</div>
<div class="t" style="left:691.2px;top:503.79px;font-size:9.35px;color:#444;letter-spacing:-0.120px;transform:scaleX(0.9371);transform-origin:0 0;">ABO11470307 (2/10)</div>
<div class="t" style="left:813.6px;top:503.79px;font-size:9.35px;color:#444;letter-spacing:-0.120px;transform:scaleX(0.8960);transform-origin:0 0;">10,00 €</div>
<div class="t" style="left:856.9px;top:243.89px;font-size:9.35px;color:#444;letter-spacing:-0.120px;transform:scaleX(0.9273);transform-origin:0 0;">0 sélectionné(s) | Selection | Clear | All</div>
<div class="t" style="left:872.4px;top:270.57px;font-size:11.5px;color:#7a7a7a;letter-spacing:-0.002px;-webkit-text-stroke:0">Actions rapides</div>
<div class="t" style="left:882px;top:288.39px;font-size:9.35px;color:#444;letter-spacing:-0.120px;transform:scaleX(0.9371);transform-origin:0 0;">Modifier la commande</div>
<div class="t" style="left:882px;top:303.99px;font-size:9.35px;color:#444;letter-spacing:-0.120px;transform:scaleX(0.9104);transform-origin:0 0;">Changement de date</div>
<div class="t" style="left:883px;top:319.59px;font-size:9.35px;color:#444;letter-spacing:-0.120px;transform:scaleX(0.9240);transform-origin:0 0;">Annuler la commande</div>
<div class="t" style="left:873px;top:368.77px;font-size:11.5px;color:#7a7a7a;-webkit-text-stroke:0">Tickets</div>
<div class="t" style="left:881.6px;top:387.59px;font-size:9.35px;color:#444;letter-spacing:-0.120px;transform:scaleX(0.9543);transform-origin:0 0;">Voir les tickets (pdf)</div>
<div class="t" style="left:882.4px;top:402.99px;font-size:9.35px;color:#444;letter-spacing:-0.120px;transform:scaleX(0.9388);transform-origin:0 0;">Imprimer sur Virtual Printer</div>
<div class="t" style="left:872.4px;top:452.37px;font-size:11.5px;color:#7a7a7a;letter-spacing:-0.043px;-webkit-text-stroke:0">Emails</div>
<div class="t" style="left:882.6px;top:470.29px;font-size:9.35px;color:#444;letter-spacing:-0.120px;transform:scaleX(0.9502);transform-origin:0 0;">Voir l'email</div>
<div class="t" style="left:882.6px;top:486.09px;font-size:9.35px;color:#444;letter-spacing:-0.120px;transform:scaleX(0.9025);transform-origin:0 0;">Envoyer l'email</div>
<div class="t" style="left:882.6px;top:501.69px;font-size:9.35px;color:#444;letter-spacing:-0.120px;transform:scaleX(0.9229);transform-origin:0 0;">M'envoyer l'email</div>
</body></html>
